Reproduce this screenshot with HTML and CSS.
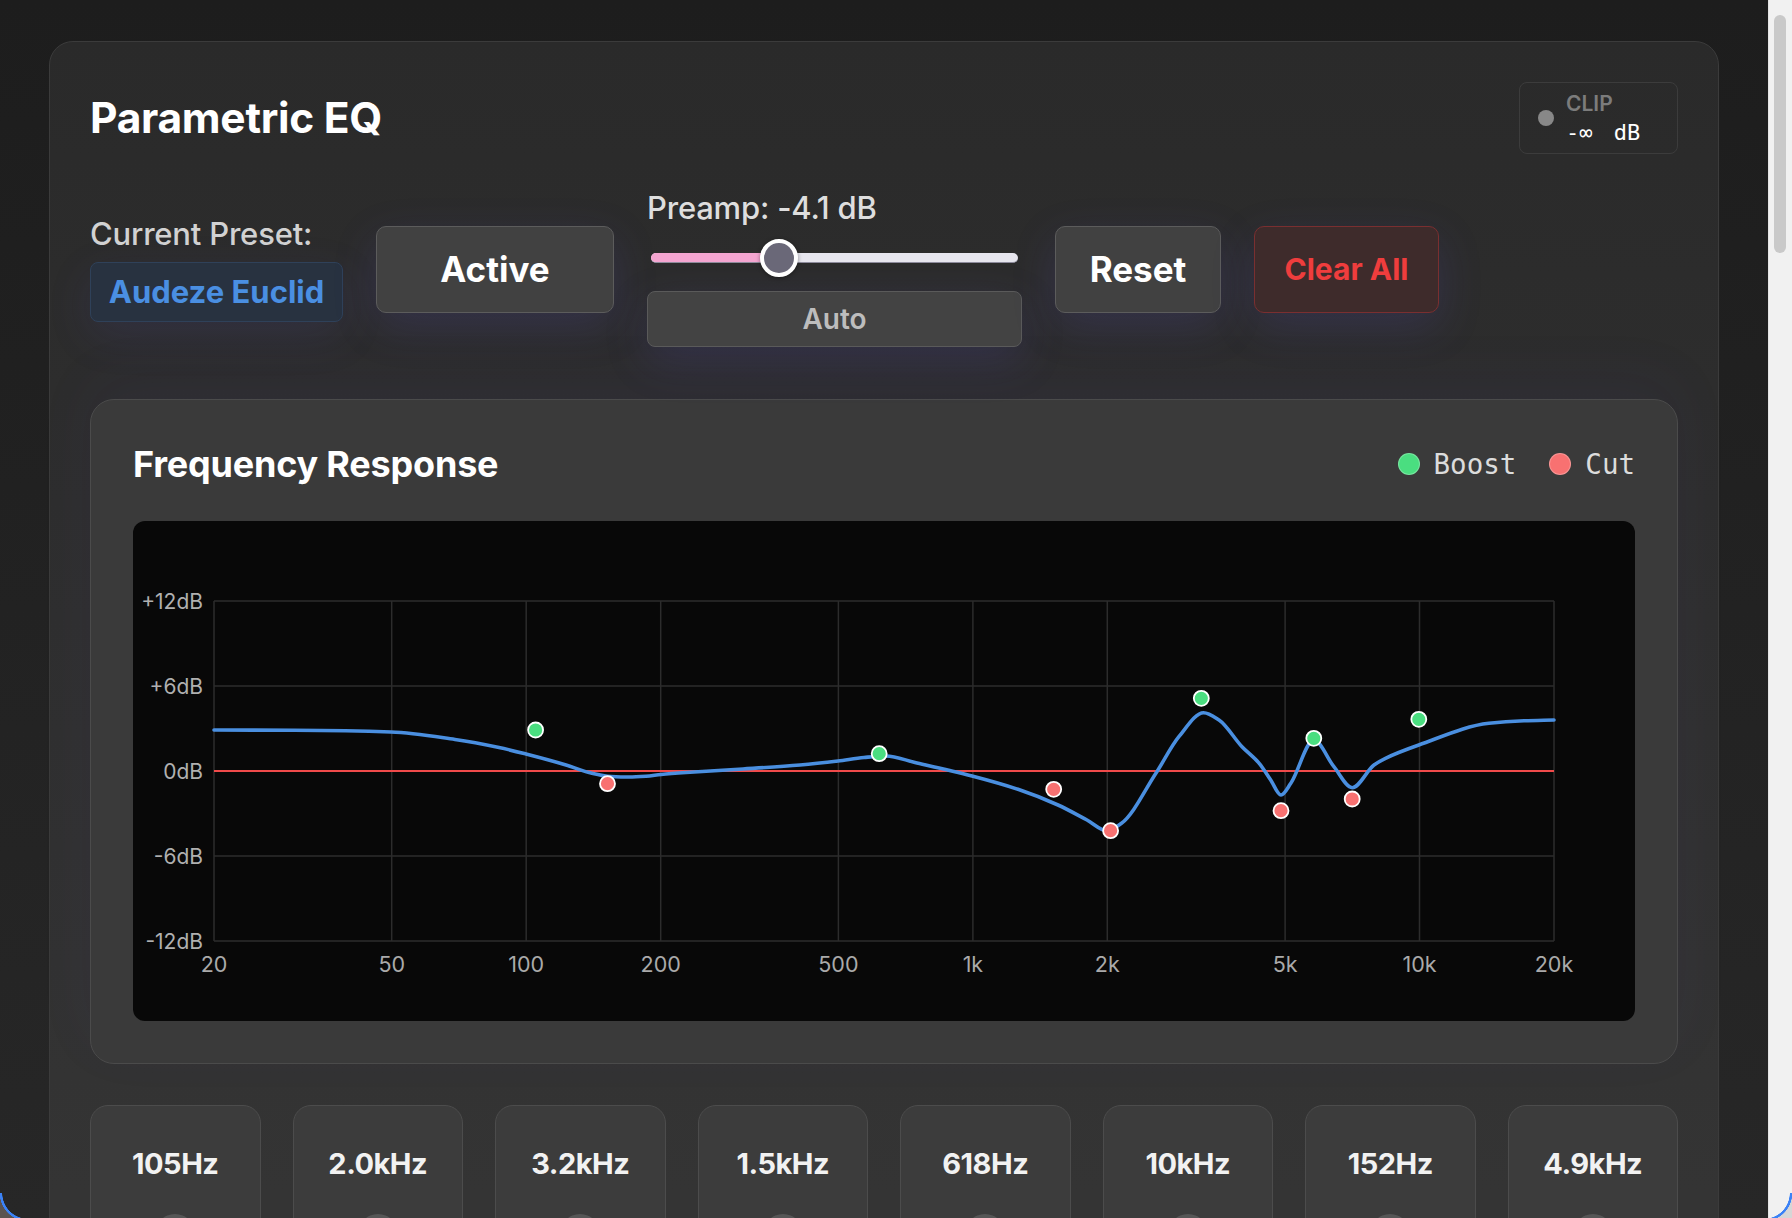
FILE: index.html
```html
<!DOCTYPE html>
<html lang="en">
<head>
<meta charset="utf-8">
<title>Parametric EQ</title>
<link rel="stylesheet" href="styles.css">
</head>
<body>
<div class="app">
  <div class="viewport">
    <main class="page">
      <section class="eq-card">
        <header class="eq-header">
          <h1 class="eq-title">Parametric EQ</h1>
          <div class="clip">
            <span class="clip-dot"></span>
            <div class="clip-text">
              <span class="clip-label">CLIP</span>
              <span class="clip-value">-∞ dB</span>
            </div>
          </div>
        </header>

        <div class="controls">
          <div class="preset">
            <span class="preset-label">Current Preset:</span>
            <span class="preset-name">Audeze Euclid</span>
          </div>
          <button class="btn btn-active">Active</button>
          <div class="preamp">
            <span class="preamp-label">Preamp: -4.1 dB</span>
            <div class="slider">
              <div class="slider-track"><div class="slider-fill" style="width:34.9%"></div></div>
              <div class="slider-thumb" style="left:34.9%"></div>
            </div>
            <button class="btn btn-auto">Auto</button>
          </div>
          <button class="btn btn-reset">Reset</button>
          <button class="btn btn-clear">Clear All</button>
        </div>

        <section class="fr-card">
          <div class="fr-header">
            <h2 class="fr-title">Frequency Response</h2>
            <div class="legend">
              <span class="legend-item"><span class="dot dot-boost"></span>Boost</span>
              <span class="legend-item"><span class="dot dot-cut"></span>Cut</span>
            </div>
          </div>
          <div class="chart">
            <svg class="chart-svg" viewBox="0 0 1500 500" width="1500" height="500">
              <g class="grid">
                <line x1="80" y1="80" x2="1420" y2="80"/>
                <line x1="80" y1="165" x2="1420" y2="165"/>
                <line x1="80" y1="335" x2="1420" y2="335"/>
                <line x1="80" y1="420" x2="1420" y2="420"/>
                <line x1="80" y1="80" x2="80" y2="420"/>
                <line x1="257.7" y1="80" x2="257.7" y2="420"/>
                <line x1="392.2" y1="80" x2="392.2" y2="420"/>
                <line x1="526.7" y1="80" x2="526.7" y2="420"/>
                <line x1="704.4" y1="80" x2="704.4" y2="420"/>
                <line x1="838.9" y1="80" x2="838.9" y2="420"/>
                <line x1="973.3" y1="80" x2="973.3" y2="420"/>
                <line x1="1151.1" y1="80" x2="1151.1" y2="420"/>
                <line x1="1285.5" y1="80" x2="1285.5" y2="420"/>
                <line x1="1420" y1="80" x2="1420" y2="420"/>
              </g>
              <line class="zero-line" x1="80" y1="250" x2="1420" y2="250"/>
              <g class="y-labels">
                <text x="69" y="80">+12dB</text>
                <text x="69" y="165">+6dB</text>
                <text x="69" y="250">0dB</text>
                <text x="69" y="335">-6dB</text>
                <text x="69" y="420">-12dB</text>
              </g>
              <g class="x-labels">
                <text x="80" y="443">20</text>
                <text x="257.7" y="443">50</text>
                <text x="392.2" y="443">100</text>
                <text x="526.7" y="443">200</text>
                <text x="704.4" y="443">500</text>
                <text x="838.9" y="443">1k</text>
                <text x="973.3" y="443">2k</text>
                <text x="1151.1" y="443">5k</text>
                <text x="1285.5" y="443">10k</text>
                <text x="1420" y="443">20k</text>
              </g>
              <path id="curve" class="curve" d=""/>
              <g class="points">
                <circle class="pt-boost" cx="401.6" cy="209" r="7.5"/>
                <circle class="pt-cut" cx="473.5" cy="262.7" r="7.5"/>
                <circle class="pt-boost" cx="745.2" cy="232.7" r="7.5"/>
                <circle class="pt-cut" cx="919.7" cy="268.3" r="7.5"/>
                <circle class="pt-cut" cx="976.6" cy="309.7" r="7.5"/>
                <circle class="pt-boost" cx="1067.3" cy="177.3" r="7.5"/>
                <circle class="pt-cut" cx="1147" cy="289.7" r="7.5"/>
                <circle class="pt-boost" cx="1179.8" cy="217.3" r="7.5"/>
                <circle class="pt-cut" cx="1218.2" cy="278" r="7.5"/>
                <circle class="pt-boost" cx="1284.8" cy="198.3" r="7.5"/>
              </g>
            </svg>
          </div>
        </section>

        <div class="bands">
          <div class="band"><span class="band-freq">105Hz</span><span class="knob"></span></div>
          <div class="band"><span class="band-freq">2.0kHz</span><span class="knob"></span></div>
          <div class="band"><span class="band-freq">3.2kHz</span><span class="knob"></span></div>
          <div class="band"><span class="band-freq">1.5kHz</span><span class="knob"></span></div>
          <div class="band"><span class="band-freq">618Hz</span><span class="knob"></span></div>
          <div class="band"><span class="band-freq">10kHz</span><span class="knob"></span></div>
          <div class="band"><span class="band-freq">152Hz</span><span class="knob"></span></div>
          <div class="band"><span class="band-freq">4.9kHz</span><span class="knob"></span></div>
        </div>
      </section>
    </main>
  </div>
  <div class="scrollbar"><div class="scroll-thumb"></div></div>
</div>
<div class="corner corner-left"></div>
<div class="corner corner-right"></div>
<script src="app.js"></script>
</body>
</html>
```

FILE: styles.css
```css
* { box-sizing: border-box; margin: 0; padding: 0; }
html, body { height: 100%; }
body {
  background: #1e1e1e;
  font-family: Inter, "Noto Sans", sans-serif;
  color: #fff;
  overflow: hidden;
}
.app { display: flex; height: 100vh; }
.viewport {
  flex: 1;
  min-width: 0;
  overflow: hidden;
  background: linear-gradient(180deg, #1d1d1d 0, #272727 100%);
}
.scrollbar {
  width: 24px;
  flex: none;
  background: #f1f1f1;
  border-left: 1px solid #e4e4e4;
  padding: 15px 6px 0 5px;
}
.scroll-thumb { height: 238px; background: #c9c9c9; border-radius: 7px; }

.page { padding: 41px 49px 120px; }

.eq-card {
  border: 1px solid #3b3b3b;
  border-radius: 24px;
  background: linear-gradient(180deg, #2a2a2a 0, #343434 1150px, #343434 100%);
  padding: 40px;
}
.eq-header { display: flex; justify-content: space-between; align-items: center; height: 72px; }
.eq-title { font-size: 42.5px; font-weight: 700; line-height: 72px; letter-spacing: -0.3px; color: #fff; }
.clip {
  width: 159px; height: 72px;
  display: flex; align-items: center; gap: 12px;
  padding: 0 18px;
  border: 1.5px solid #3c3c3c; border-radius: 8px;
}
.clip-dot { width: 16px; height: 16px; border-radius: 50%; background: #888; flex: none; }
.clip-text { display: flex; flex-direction: column; }
.clip-label { font-size: 21px; font-weight: 600; line-height: 28px; color: #7c7c7c; }
.clip-value { font-family: "DejaVu Sans Mono", monospace; font-size: 22px; line-height: 29px; color: #fff; word-spacing: 8px; white-space: pre; }

.controls { display: flex; align-items: center; gap: 33px; margin-top: 37px; }
.preset { display: flex; flex-direction: column; gap: 11px; width: 253px; }
.preset-label { font-size: 31px; font-weight: 500; line-height: 34px; color: #d2d2d2; letter-spacing: -0.2px; }
.preset-name {
  height: 60px; display: flex; align-items: center; justify-content: center;
  background: #283240; border: 1.5px solid #2f4159; border-radius: 8px;
  color: #4a8fe2; font-size: 31px; font-weight: 700;
  box-shadow: 0 14px 44px rgba(84, 76, 190, 0.14);
}
.btn {
  font-family: inherit; font-weight: 700; color: #fff;
  background: #414141; border: 1.5px solid #5c5c5c; border-radius: 10px;
  height: 87px;
  box-shadow: 0 14px 44px rgba(84, 76, 190, 0.2);
}
.btn-active { width: 238px; font-size: 35px; }
.btn-reset { width: 166px; font-size: 35px; }
.btn-clear { width: 185px; font-size: 30px; background: #3e2b2b; border-color: #7a2f30; color: #ef3d3d; }
.preamp { display: flex; flex-direction: column; width: 375px; }
.preamp-label { font-size: 31px; font-weight: 500; line-height: 34px; color: #dedede; margin-bottom: 14px; letter-spacing: -0.2px; }
.slider { position: relative; height: 38px; margin: 0 4px 14px; display: flex; align-items: center; }
.slider-track {
  width: 100%; height: 10px; border-radius: 5px;
  background: #e7e6ee; border-bottom: 1.5px solid #8d8b9c;
  overflow: hidden;
}
.slider-fill { height: 100%; background: #f4a5d0; }
.slider-thumb {
  position: absolute; top: 0; width: 38px; height: 38px; border-radius: 50%;
  transform: translateX(-50%);
  background: #6a6878; border: 4px solid #fff;
  box-shadow: 0 1px 4px rgba(0,0,0,0.4);
}
.btn-auto {
  width: 100%; height: 56px; border-radius: 8px;
  background: #434343; border-color: #5a5a5a;
  font-size: 28px; font-weight: 600; color: #bdbdbd;
}

.fr-card {
  margin-top: 52px;
  background: #3a3a3a;
  border: 1.5px solid #4b4b4b;
  border-radius: 24px;
  padding: 42px;
  box-shadow: 0 -20px 60px rgba(84, 76, 190, 0.06);
}
.fr-header { display: flex; justify-content: space-between; align-items: center; height: 44px; margin-bottom: 35px; }
.fr-title { font-size: 36px; font-weight: 700; line-height: 44px; color: #fff; letter-spacing: -0.2px; }
.legend { display: flex; gap: 33px; }
.legend-item {
  display: flex; align-items: center; gap: 14px;
  font-family: "DejaVu Sans Mono", monospace; font-size: 27.5px; color: #dcdcdc;
}
.dot { width: 22px; height: 22px; border-radius: 50%; border: 1.5px solid rgba(255,255,255,0.25); }
.dot-boost { background: #4ade80; }
.dot-cut { background: #f87171; }

.chart { height: 500px; background: #080808; border-radius: 12px; overflow: hidden; }
.chart-svg { display: block; width: 100%; height: 500px; }
.grid line { stroke: #2c2c2c; stroke-width: 1.5; }
.zero-line { stroke: #f04a4a; stroke-width: 2; }
.y-labels text { font-family: Inter, sans-serif; font-size: 21px; fill: #b0b0b0; text-anchor: end; dominant-baseline: central; }
.x-labels text { font-family: Inter, sans-serif; font-size: 21.5px; fill: #aaaaaa; text-anchor: middle; dominant-baseline: central; }
.curve { fill: none; stroke: #4a8fe0; stroke-width: 3.6; stroke-linecap: round; stroke-linejoin: round; }
.points circle { stroke: #fff; stroke-width: 1.8; }
.pt-boost { fill: #4ade80; }
.pt-cut { fill: #f87171; }

.bands {
  margin-top: 41px;
  display: grid; grid-template-columns: repeat(8, 1fr); gap: 32px;
}
.band {
  background: #3c3c3c; border: 1.5px solid #4c4c4c; border-radius: 18px;
  padding: 40px 12px 30px;
  display: flex; flex-direction: column; align-items: center;
  min-height: 300px;
}
.band-freq { font-size: 29px; font-weight: 700; line-height: 36px; color: #f2f2f2; letter-spacing: -0.5px; }
.knob { width: 40px; height: 40px; border-radius: 50%; background: #565656; margin-top: 32px; }

.corner { position: fixed; bottom: -3px; width: 28px; height: 28px; pointer-events: none; }
.corner-left {
  left: 0;
  background: radial-gradient(circle at 100% 0, transparent 25.5px, #3b82f6 26px, #3b82f6 28px, #5b534f 28.5px);
}
.corner-right {
  right: 0;
  background: radial-gradient(circle at 0 0, transparent 25.5px, #3b82f6 26px, #3b82f6 28px, #d6d6d6 28.5px);
}
```

FILE: app.js
```js
(function () {
  var pts = [
    [80, 209], [160, 209.3], [257, 211], [321, 218.5], [365, 226.5], [392, 233],
    [432, 244], [455, 251.5], [477, 255.5], [495, 256], [512, 255.3], [527, 253.5],
    [552, 251.5], [609, 248], [666, 244], [704, 240], [730, 236.5], [752, 235],
    [781, 241.5], [838, 255], [884, 268.3], [924, 284], [953, 299], [973, 309.7],
    [987.5, 302.3], [1021.9, 252.3], [1044.9, 215.7], [1069.6, 191.7], [1085, 199],
    [1108, 225.7], [1125.2, 242.3], [1136.7, 259], [1147, 274], [1156.8, 262.3],
    [1179.8, 219], [1199.9, 245.7], [1218.2, 266.7], [1240, 244], [1251.5, 237.3],
    [1284.8, 224], [1354.9, 202.3], [1390, 199.8], [1420, 199]
  ];
  var n = pts.length, dx = [], m = [], t = [], i;
  for (i = 0; i < n - 1; i++) {
    dx[i] = pts[i + 1][0] - pts[i][0];
    m[i] = (pts[i + 1][1] - pts[i][1]) / dx[i];
  }
  t[0] = m[0];
  for (i = 1; i < n - 1; i++) {
    if (m[i - 1] * m[i] <= 0) { t[i] = 0; }
    else {
      t[i] = 3 * (dx[i - 1] + dx[i]) /
        ((2 * dx[i] + dx[i - 1]) / m[i - 1] + (dx[i] + 2 * dx[i - 1]) / m[i]);
    }
  }
  t[n - 1] = m[n - 2];
  var d = 'M' + pts[0][0] + ',' + pts[0][1];
  for (i = 0; i < n - 1; i++) {
    var h = dx[i] / 3;
    d += ' C' + (pts[i][0] + h).toFixed(2) + ',' + (pts[i][1] + t[i] * h).toFixed(2) +
      ' ' + (pts[i + 1][0] - h).toFixed(2) + ',' + (pts[i + 1][1] - t[i + 1] * h).toFixed(2) +
      ' ' + pts[i + 1][0] + ',' + pts[i + 1][1];
  }
  document.getElementById('curve').setAttribute('d', d);
})();
```
